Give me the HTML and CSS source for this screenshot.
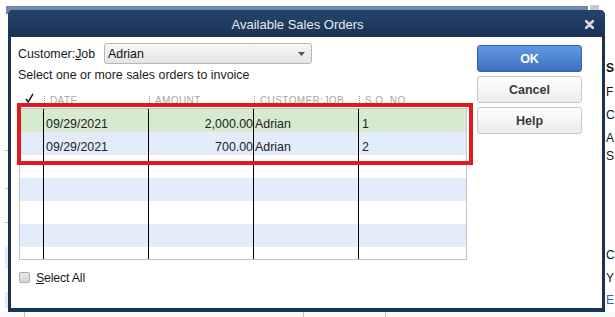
FILE: index.html
```html
<!DOCTYPE html>
<html>
<head>
<meta charset="utf-8">
<title>Available Sales Orders</title>
<link rel="stylesheet" href="styles.css">
</head>
<body>
<div class="desk">
  <div class="desk-top">
    <div class="desk-tabbar"></div>
    <div class="desk-tabend"></div>
  </div>
  <div class="desk-mid">
    <div class="desk-left">
      <span class="dl-mark dl-m1"></span>
      <span class="dl-mark dl-m2"></span>
      <span class="dl-mark dl-m3"></span>
      <span class="dl-block dl-b1"></span>
      <span class="dl-block dl-b2"></span>
    </div>
    <div class="desk-right">
      <div class="dr-line dr-head">S</div>
      <div class="dr-line dr-f">F</div>
      <div class="dr-line dr-c">C</div>
      <div class="dr-line dr-a">A</div>
      <div class="dr-line dr-s">S</div>
      <div class="dr-line dr-c2">C</div>
      <div class="dr-line dr-y">Y</div>
      <div class="dr-line dr-link">E</div>
    </div>
  </div>
  <div class="desk-bottom">
    <div class="db-cell db-c1"></div>
    <div class="db-cell db-c2"></div>
    <div class="db-cell db-c3"></div>
    <div class="db-cell db-c4"></div>
  </div>

  <div class="dialog">
    <div class="titlebar">
      <span class="title">Available Sales Orders</span>
      <svg class="close" width="9" height="9" viewBox="0 0 9 9"><path d="M1 1 L8 8 M8 1 L1 8" stroke="#d6dbe3" stroke-width="2.5" stroke-linecap="round"/></svg>
    </div>
    <div class="dbody">
      <div class="main">
        <div class="cust-row">
          <label class="cust-label">Customer:<u>J</u>ob</label>
          <div class="combo">
            <span class="combo-text">Adrian</span>
            <svg class="combo-arrow" width="7" height="4" viewBox="0 0 7 4"><path d="M0 0 H7 L3.5 4 Z" fill="#555"/></svg>
          </div>
        </div>
        <div class="hint">Select one or more sales orders to invoice</div>
        <div class="ghead">
          <div class="hcell hcheck"><svg width="9" height="10" viewBox="0 0 9 10"><path d="M1 6 L3.2 9 L8 0.8" fill="none" stroke="#111" stroke-width="1.4"/></svg></div>
          <div class="hcell"><span class="sep"></span>DATE</div>
          <div class="hcell"><span class="sep"></span>AMOUNT</div>
          <div class="hcell"><span class="sep"></span>CUSTOMER:JOB</div>
          <div class="hcell"><span class="sep"></span>S.O. NO.</div>
        </div>
        <div class="grid">
          <div class="row row-green">
            <div class="cell"></div>
            <div class="cell c-date">09/29/2021</div>
            <div class="cell c-amt">2,000.00</div>
            <div class="cell c-cust">Adrian</div>
            <div class="cell c-no">1</div>
          </div>
          <div class="row row-blue">
            <div class="cell"></div>
            <div class="cell c-date">09/29/2021</div>
            <div class="cell c-amt">700.00</div>
            <div class="cell c-cust">Adrian</div>
            <div class="cell c-no">2</div>
          </div>
          <div class="row">
            <div class="cell"></div><div class="cell"></div><div class="cell"></div><div class="cell"></div><div class="cell"></div>
          </div>
          <div class="row row-blue">
            <div class="cell"></div><div class="cell"></div><div class="cell"></div><div class="cell"></div><div class="cell"></div>
          </div>
          <div class="row">
            <div class="cell"></div><div class="cell"></div><div class="cell"></div><div class="cell"></div><div class="cell"></div>
          </div>
          <div class="row row-blue">
            <div class="cell"></div><div class="cell"></div><div class="cell"></div><div class="cell"></div><div class="cell"></div>
          </div>
          <div class="row">
            <div class="cell"></div><div class="cell"></div><div class="cell"></div><div class="cell"></div><div class="cell"></div>
          </div>
        </div>
        <div class="select-all">
          <span class="checkbox"></span>
          <span class="sa-text"><u>S</u>elect All</span>
        </div>
        <div class="highlight"></div>
      </div>
      <div class="buttons">
        <div class="btn btn-ok">OK</div>
        <div class="btn">Cancel</div>
        <div class="btn">Help</div>
      </div>
    </div>
  </div>
</div>
</body>
</html>
```

FILE: styles.css
```css
* { box-sizing: border-box; }

html, body {
  margin: 0;
  padding: 0;
}

body {
  width: 615px;
  height: 317px;
  overflow: hidden;
  background: #ffffff;
  font-family: "Liberation Sans", Arial, sans-serif;
  font-size: 12.4px;
  color: #1c1c1c;
}

/* ---------- page behind the dialog ---------- */
.desk {
  position: relative;
  width: 615px;
  height: 317px;
  display: flex;
  flex-direction: column;
  background: #ffffff;
}

.desk-top {
  height: 14px;
  display: flex;
  align-items: flex-start;
  padding: 6px 0 0 6px;
  gap: 2px;
}

.desk-tabbar {
  width: 582px;
  height: 8px;
  background: #6f88ad;
}

.desk-tabend {
  width: 9px;
  height: 5px;
  margin-top: -1px;
  background: #c9c9c9;
}

.desk-mid {
  height: 298px;
  display: flex;
  justify-content: space-between;
}

.desk-left {
  width: 8px;
  display: flex;
  flex-direction: column;
  align-items: flex-end;
}

.dl-mark {
  display: block;
  width: 3px;
  height: 1px;
  background: #b9b9b9;
}

.dl-m1 { margin-top: 136px; }
.dl-m2 { margin-top: 37px; }
.dl-m3 { margin-top: 33px; }

.dl-block {
  display: block;
  width: 3px;
  background: #e4ecf7;
}

.dl-b1 { margin-top: 23px; height: 23px; }
.dl-b2 { margin-top: 23px; height: 16px; }

.desk-right {
  width: 9px;
  white-space: nowrap;
  font-size: 12px;
  line-height: 14px;
  color: #111;
  padding-top: 47px;
}

.dr-head { font-weight: bold; }
.dr-f { margin-top: 10px; }
.dr-c { margin-top: 9px; }
.dr-a { margin-top: 9px; }
.dr-s { margin-top: 4px; }
.dr-c2 { margin-top: 85px; }
.dr-y { margin-top: 9px; }
.dr-link { margin-top: 8px; color: #2a66b8; }

.desk-bottom {
  height: 5px;
  display: flex;
  background: #f7f8fa;
}

.db-cell { height: 5px; border-left: 1px solid #c4c4c4; }
.db-c1 { width: 24px; border-left: none; }
.db-c2 { width: 279px; }
.db-c3 { width: 82px; }
.db-c4 { flex: 1; }

/* ---------- dialog ---------- */
.dialog {
  position: absolute;
  left: 8px;
  top: 10px;
  width: 597px;
  height: 302px;
  background: #1b3252;
  border-radius: 5px 5px 0 0;
  padding: 0 3px 4px 3px;
  display: flex;
  flex-direction: column;
}

.titlebar {
  position: relative;
  height: 27px;
  margin: 0 -3px;
  padding-right: 18px;
  border-radius: 5px 5px 0 0;
  background: linear-gradient(#25446c, #1b3253);
  display: flex;
  align-items: center;
  justify-content: center;
}

.title {
  color: #e6ebf2;
  font-size: 13px;
  padding-top: 1px;
}

.close {
  position: absolute;
  right: 11px;
  top: 10px;
}

.dbody {
  flex: 1;
  background: #ffffff;
  display: flex;
  gap: 10px;
  padding: 6px 20px 0 8px;
}

.main {
  position: relative;
  width: 448px;
  display: flex;
  flex-direction: column;
}

.cust-row {
  display: flex;
  align-items: center;
  height: 21px;
  margin-left: -1px;
}

.cust-label {
  width: 86px;
  color: #1a1a1a;
}

.combo {
  width: 208px;
  height: 21px;
  border: 1px solid #b7b7b7;
  border-radius: 3px;
  background: linear-gradient(#f6f6f6, #e5e5e5);
  display: flex;
  align-items: center;
  justify-content: space-between;
  padding: 0 6px 0 3px;
  color: #111;
}

.hint {
  margin-top: 4px;
  line-height: 14px;
  margin-left: -1px;
}

.ghead {
  margin-top: 9px;
  height: 17px;
  display: grid;
  grid-template-columns: 24px 105px 105px 105px 1fr;
  font-size: 10px;
  letter-spacing: 0.4px;
  color: #a6a6a6;
}

.hcell {
  display: flex;
  align-items: center;
  gap: 5px;
  padding-left: 1px;
  padding-top: 2px;
  line-height: 12px;
  white-space: nowrap;
}

.hcheck {
  padding-left: 6px;
  padding-top: 0;
  padding-bottom: 3px;
}

.sep {
  display: block;
  width: 0;
  height: 9px;
  border-left: 1px dotted #9a9a9a;
}

.grid {
  height: 152px;
  border: 1px solid #c4c4c4;
  overflow: hidden;
  display: flex;
  flex-direction: column;
}

.row {
  flex: none;
  height: 23px;
  display: grid;
  grid-template-columns: 23px 105px 105px 105px 1fr;
  background: #ffffff;
}

.row-green { background: #d5eacf; }
.row-blue { background: #e3ecfa; }

.cell {
  border-left: 1px solid #000;
  padding-top: 8px;
  line-height: 14px;
  color: #222;
  white-space: nowrap;
}

.cell:first-child { border-left: none; }

.c-date { padding-left: 2px; }
.c-amt { text-align: right; padding-right: 0; }
.c-cust { padding-left: 1px; }
.c-no { padding-left: 3px; }

.select-all {
  margin-top: 12px;
  display: flex;
  align-items: center;
  gap: 6px;
  height: 11px;
}

.checkbox {
  display: block;
  width: 11px;
  height: 11px;
  border: 1px solid #ababab;
  border-radius: 2px;
  background: linear-gradient(#e9e9e9, #d4d4d4);
}

.sa-text {
  line-height: 14px;
  letter-spacing: -0.2px;
}

.highlight {
  position: absolute;
  left: -2px;
  top: 60px;
  width: 456px;
  height: 62px;
  border: 4px solid #e21a1f;
  pointer-events: none;
}

.buttons {
  width: 105px;
  padding-top: 2px;
  display: flex;
  flex-direction: column;
  gap: 4px;
}

.btn {
  height: 27px;
  border: 1px solid #c8c8c8;
  border-radius: 3px;
  background: linear-gradient(#ffffff, #ececec);
  display: flex;
  align-items: center;
  justify-content: center;
  font-weight: bold;
  font-size: 12.5px;
  color: #3a3a3a;
}

.btn-ok {
  border-color: #3563a8;
  background: linear-gradient(#6499e0, #3a6fc3);
  color: #ffffff;
}
```
